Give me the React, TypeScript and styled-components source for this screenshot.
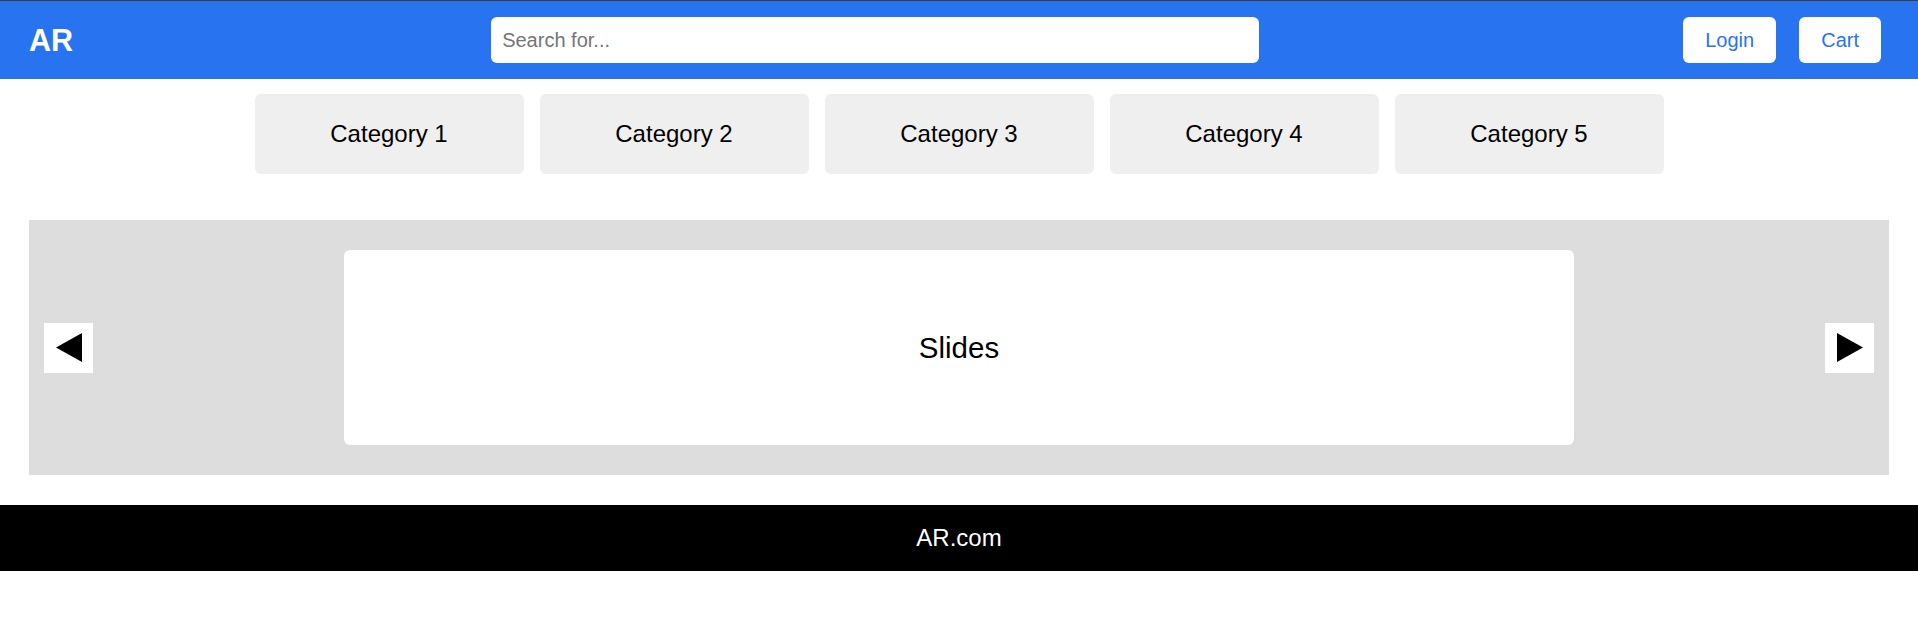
import React from "react";
import styled, { createGlobalStyle } from "styled-components";

const GlobalStyle = createGlobalStyle`
  * { box-sizing: border-box; }
  html, body { margin: 0; padding: 0; background: #ffffff; }
  body {
    font-family: "Liberation Sans", Arial, sans-serif;
    border-top: 1px solid #3c3c3c;
  }
`;

const Header = styled.header`
  height: 78px;
  background: #2874f0;
  display: flex;
  align-items: center;
  justify-content: space-between;
  padding: 0 37px 0 29px;
`;

const Logo = styled.div`
  color: #ffffff;
  font-weight: 700;
  font-size: 30.5px;
  line-height: 1;
`;

const Search = styled.input`
  width: 768px;
  height: 46px;
  border: none;
  border-radius: 6px;
  padding: 0 11px;
  margin-right: 6px;
  font-family: "Liberation Sans", Arial, sans-serif;
  font-size: 20px;
  color: #222;
  background: #ffffff;
  outline: none;
  &::placeholder { color: #757575; }
`;

const Actions = styled.div`
  display: flex;
  gap: 23px;
`;

const HeaderButton = styled.button`
  height: 46px;
  padding: 0 22px;
  border: none;
  border-radius: 6px;
  background: #ffffff;
  color: #2874f0;
  font-family: "Liberation Sans", Arial, sans-serif;
  font-size: 20px;
  cursor: pointer;
`;

const Categories = styled.nav`
  display: flex;
  justify-content: center;
  gap: 16px;
  margin-top: 15px;
`;

const Category = styled.div`
  width: 269px;
  height: 80px;
  background: #efefef;
  border-radius: 6px;
  display: flex;
  align-items: center;
  justify-content: center;
  font-size: 24px;
  color: #000;
`;

const Slider = styled.section`
  margin: 46px 29px 0;
  height: 255px;
  background: #dddddd;
  display: flex;
  align-items: center;
  justify-content: space-between;
  padding: 0 15px;
`;

const ArrowButton = styled.button`
  width: 49px;
  height: 50px;
  border: none;
  padding: 0;
  background: #ffffff;
  display: flex;
  align-items: center;
  justify-content: center;
  cursor: pointer;
`;

const Slide = styled.div`
  width: 1230px;
  height: 195px;
  background: #ffffff;
  border-radius: 6px;
  display: flex;
  align-items: center;
  justify-content: center;
  font-size: 29.5px;
  color: #000;
`;

const Footer = styled.footer`
  margin-top: 30px;
  height: 66px;
  background: #000000;
  color: #ffffff;
  display: flex;
  align-items: center;
  justify-content: center;
  font-size: 24px;
`;

const Triangle = ({ dir }: { dir: "left" | "right" }) => (
  <svg width="26" height="29" viewBox="0 0 26 29">
    {dir === "left" ? (
      <polygon points="26,0 26,29 0,14.5" fill="#000" />
    ) : (
      <polygon points="0,0 0,29 26,14.5" fill="#000" />
    )}
  </svg>
);

export default function App() {
  return (
    <>
      <GlobalStyle />
      <Header>
        <Logo>AR</Logo>
        <Search placeholder="Search for..." />
        <Actions>
          <HeaderButton>Login</HeaderButton>
          <HeaderButton>Cart</HeaderButton>
        </Actions>
      </Header>
      <Categories>
        {[1, 2, 3, 4, 5].map((n) => (
          <Category key={n}>Category {n}</Category>
        ))}
      </Categories>
      <Slider>
        <ArrowButton aria-label="Previous">
          <Triangle dir="left" />
        </ArrowButton>
        <Slide>Slides</Slide>
        <ArrowButton aria-label="Next">
          <Triangle dir="right" />
        </ArrowButton>
      </Slider>
      <Footer>AR.com</Footer>
    </>
  );
}
